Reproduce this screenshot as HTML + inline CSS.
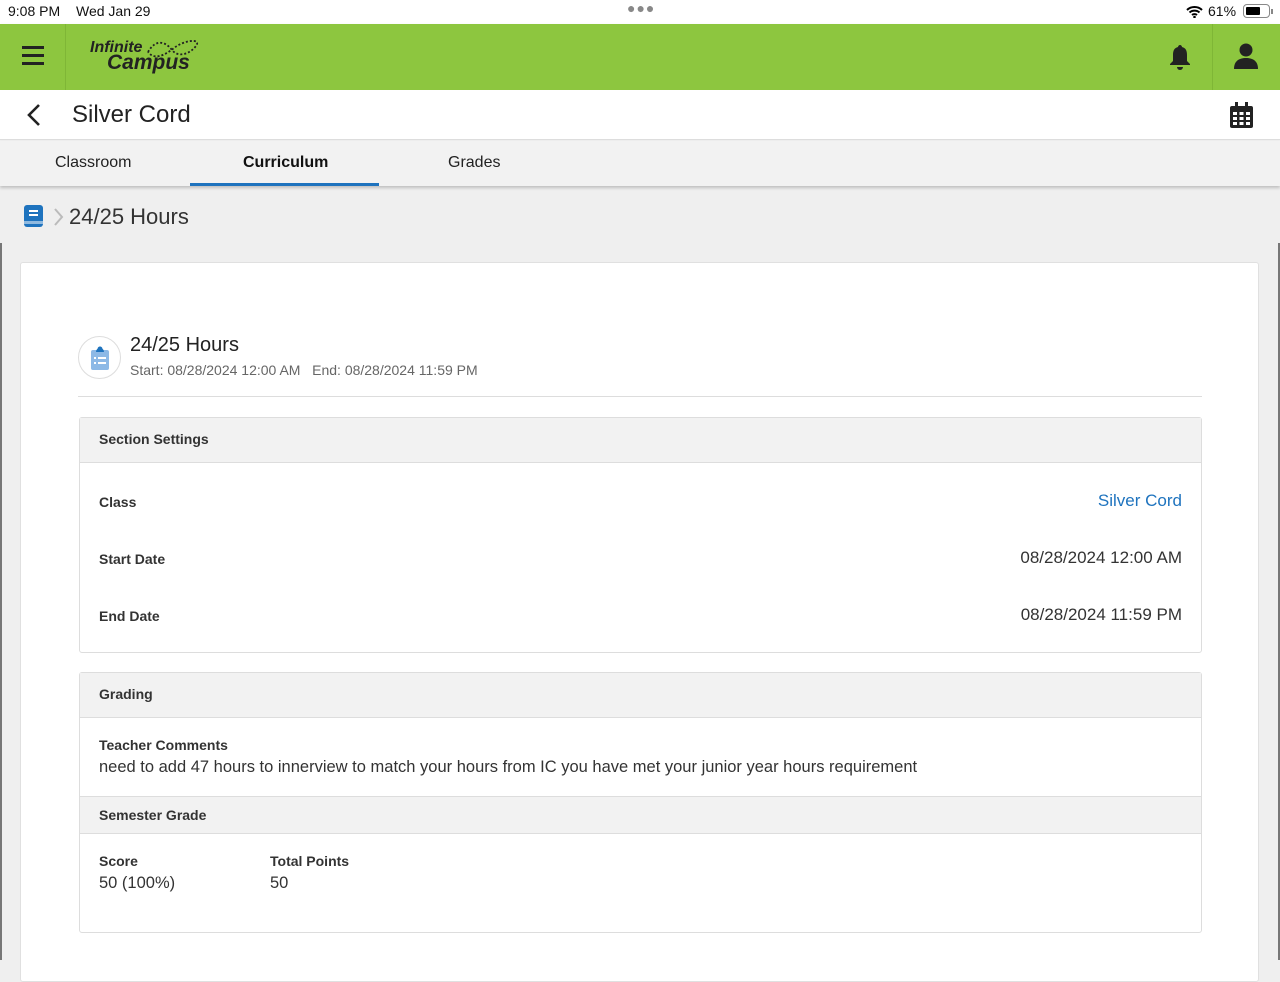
<!DOCTYPE html>
<html><head><meta charset="utf-8">
<style>
*{box-sizing:border-box;margin:0;padding:0}
body{width:1280px;height:960px;overflow:hidden;background:#efefef;font-family:"Liberation Sans",sans-serif;color:#222;position:relative}
.abs{position:absolute}
.status{top:0;left:0;width:1280px;height:24px;background:#fff;font-size:14px;font-weight:bold;color:#111}
.hdr{top:24px;left:0;width:1280px;height:66px;background:#8dc63f;box-shadow:0 2px 3px rgba(0,0,0,.25)}
.title{top:90px;left:0;width:1280px;height:50px;background:#fff;border-bottom:1px solid #ddd}
.tabs{top:141px;left:0;width:1280px;height:45px;background:#f2f2f2;box-shadow:0 2px 3px rgba(0,0,0,.2);font-size:16px}
.card{top:262px;left:20px;width:1239px;height:720px;background:#fff;border:1px solid #e0e0e0;border-radius:3px}
.panel{position:absolute;left:58px;width:1123px;border:1px solid #ddd;border-radius:3px;background:#fff}
.ph{background:#f2f2f2;border-bottom:1px solid #ddd;height:45px;padding:0 19px;line-height:42px;font-weight:bold;font-size:14px;color:#333}
.lbl{font-weight:bold;font-size:14px;color:#333}
.val{font-size:17px;color:#333}
</style></head><body>
<div class="abs status">
<span class="abs" style="left:8px;top:3px;font-weight:normal">9:08 PM</span>
<span class="abs" style="left:76px;top:3px;font-weight:normal">Wed Jan 29</span>
<span class="abs" style="left:627px;top:0px;letter-spacing:1px;color:#888;font-size:14px">●●●</span>
<svg class="abs" style="left:1186px;top:5px" width="17" height="13" viewBox="0 0 17 13"><path d="M1 5a11 11 0 0 1 15 0M3.5 7.5a7.5 7.5 0 0 1 10 0M6 10a4 4 0 0 1 5 0" stroke="#000" stroke-width="2" fill="none"/><circle cx="8.5" cy="12" r="1.3"/></svg>
<span class="abs" style="left:1208px;top:3px;font-weight:normal">61%</span>
<div class="abs" style="left:1243px;top:4px;width:27px;height:14px;border:1.5px solid #888;border-radius:4px"><div style="margin:1.5px;width:14px;height:8px;background:#000;border-radius:1px"></div></div>
<div class="abs" style="left:1271px;top:9px;width:2px;height:5px;background:#888"></div>
</div>
<div class="abs hdr">
<div class="abs" style="left:22px;top:22px;width:22px;height:3px;background:#222;box-shadow:0 8px #222,0 16px #222"></div>
<div class="abs" style="left:65px;top:0;width:1px;height:66px;background:#7fb636"></div>
<div class="abs" style="left:90px;top:15px;font-style:italic;font-size:16px;font-weight:bold;color:#222">Infinite</div>
<div class="abs" style="left:107px;top:27px;font-style:italic;font-size:21px;font-weight:bold;color:#222">Campus</div>
<svg class="abs" style="left:145px;top:8px" width="55" height="28"><path d="M3 20c8-14 18-10 24-2s18 4 24-4-12-6-22 2-20 12-26 4" fill="none" stroke="#222" stroke-width="1.8" stroke-dasharray="2 2"/></svg>
<div class="abs" style="left:1212px;top:0;width:1px;height:66px;background:#7fb636"></div>
<svg class="abs" style="left:1169px;top:20px" width="22" height="26" viewBox="0 0 22 26"><path d="M11 1c1 0 2 1 2 2 4 1 5 4 5 8v6l3 3v1H1v-1l3-3v-6c0-4 1-7 5-8 0-1 1-2 2-2z" fill="#222"/><path d="M8 23h6a3 3 0 0 1-6 0z" fill="#222"/></svg>
<svg class="abs" style="left:1234px;top:19px" width="24" height="27" viewBox="0 0 24 27"><circle cx="12" cy="7" r="6.5" fill="#222"/><path d="M0 26c0-8 5-11 12-11s12 3 12 11z" fill="#222"/></svg>
</div>
<div class="abs title">
<svg class="abs" style="left:26px;top:13px" width="16" height="24"><path d="M13 2L3 12l10 10" stroke="#222" stroke-width="2.6" fill="none"/></svg>
<div class="abs" style="left:72px;top:11px;font-size:24px;color:#222">Silver Cord</div>
<svg class="abs" style="left:1230px;top:12px" width="23" height="26" viewBox="0 0 23 26"><rect x="0" y="4" width="23" height="22" rx="2" fill="#222"/><rect x="5" y="0" width="3" height="6" fill="#222"/><rect x="15" y="0" width="3" height="6" fill="#222"/><g fill="#fff"><rect x="3" y="10" width="4" height="3"/><rect x="9.5" y="10" width="4" height="3"/><rect x="16" y="10" width="4" height="3"/><rect x="3" y="15" width="4" height="3"/><rect x="9.5" y="15" width="4" height="3"/><rect x="16" y="15" width="4" height="3"/><rect x="3" y="20" width="4" height="3"/><rect x="9.5" y="20" width="4" height="3"/><rect x="16" y="20" width="4" height="3"/></g></svg>
</div>
<div class="abs tabs">
<span class="abs" style="left:55px;top:13px">Classroom</span>
<span class="abs" style="left:243px;top:13px;font-weight:bold;color:#111">Curriculum</span>
<div class="abs" style="left:190px;top:42px;width:189px;height:3px;background:#1e73be"></div>
<span class="abs" style="left:448px;top:13px">Grades</span>
</div>
<svg class="abs" style="left:23px;top:205px" width="21" height="23"><rect x="1" y="0" width="19" height="22" rx="3" fill="#1e73be"/><rect x="6" y="5" width="9" height="2" fill="#fff"/><rect x="6" y="9" width="9" height="2" fill="#fff"/><rect x="1" y="16" width="19" height="3" fill="#fff" opacity=".5"/></svg>
<svg class="abs" style="left:53px;top:207px" width="12" height="20"><path d="M2 2l7 8-7 8" stroke="#bbb" stroke-width="2" fill="none"/></svg>
<div class="abs" style="left:69px;top:204px;font-size:22px;color:#333">24/25 Hours</div>
<div class="abs" style="left:0;top:243px;width:2px;height:717px;background:#777"></div>
<div class="abs" style="left:1278px;top:243px;width:2px;height:717px;background:#777"></div>
<div class="abs card">
<div class="abs" style="left:57px;top:73px;width:43px;height:43px;border:1px solid #ddd;border-radius:50%"></div>
<svg class="abs" style="left:70px;top:83px" width="18" height="24"><rect x="0" y="4" width="18" height="20" rx="2" fill="#8db9e6"/><path d="M5 6a4 4 0 0 1 8 0z" fill="#1e73be"/><circle cx="9" cy="3" r="2.5" fill="#1e73be"/><g fill="#fff"><rect x="3" y="11" width="2" height="2"/><rect x="7" y="11" width="8" height="2"/><rect x="3" y="16" width="2" height="2"/><rect x="7" y="16" width="8" height="2"/></g></svg>
<div class="abs" style="left:109px;top:71px;font-size:20px;color:#222">24/25 Hours</div>
<div class="abs" style="left:109px;top:99px;font-size:14px;color:#666">Start: 08/28/2024 12:00 AM&nbsp;&nbsp; End: 08/28/2024 11:59 PM</div>
<div class="abs" style="left:57px;top:133px;width:1124px;height:1px;background:#ddd"></div>
<div class="panel" style="top:154px;height:236px">
<div class="ph">Section Settings</div>
<div class="abs lbl" style="left:19px;top:76px">Class</div>
<div class="abs val" style="right:19px;top:73px;color:#1e73be">Silver Cord</div>
<div class="abs lbl" style="left:19px;top:133px">Start Date</div>
<div class="abs val" style="right:19px;top:130px">08/28/2024 12:00 AM</div>
<div class="abs lbl" style="left:19px;top:190px">End Date</div>
<div class="abs val" style="right:19px;top:187px">08/28/2024 11:59 PM</div>
</div>
<div class="panel" style="top:409px;height:261px">
<div class="ph">Grading</div>
<div class="abs lbl" style="left:19px;top:64px">Teacher Comments</div>
<div class="abs val" style="left:19px;top:85px;font-size:16.5px">need to add 47 hours to innerview to match your hours from IC you have met your junior year hours requirement</div>
<div class="abs" style="left:0;top:123px;width:100%;height:38px;background:#f2f2f2;border-top:1px solid #ddd;border-bottom:1px solid #ddd"></div>
<div class="abs lbl" style="left:19px;top:134px">Semester Grade</div>
<div class="abs lbl" style="left:19px;top:180px">Score</div>
<div class="abs val" style="left:19px;top:201px;font-size:16.5px">50 (100%)</div>
<div class="abs lbl" style="left:190px;top:180px">Total Points</div>
<div class="abs val" style="left:190px;top:201px;font-size:16.5px">50</div>
</div>
</div>
</body></html>
